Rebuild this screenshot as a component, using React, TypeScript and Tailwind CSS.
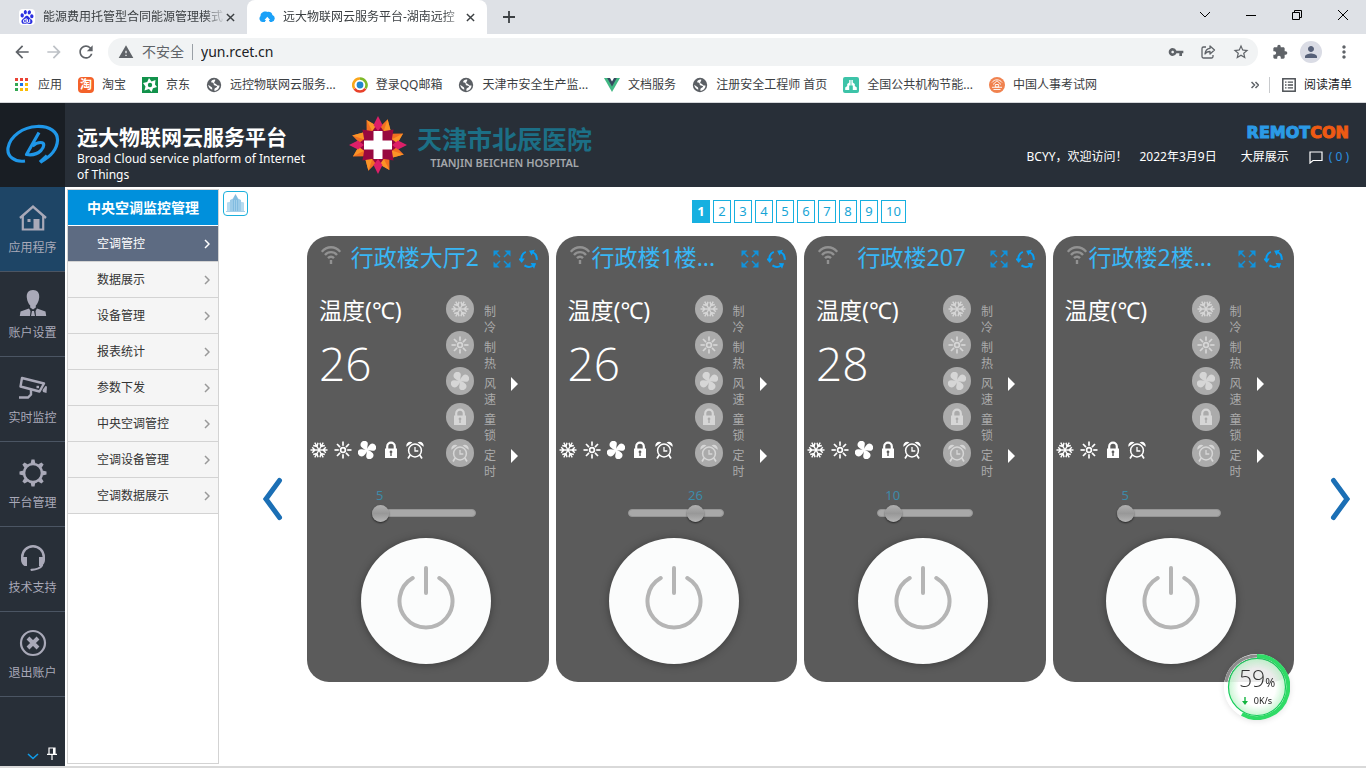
import React, { useState } from "react";
import {
  MdArrowBack,
  MdArrowForward,
  MdRefresh,
  MdWarning,
  MdVpnKey,
  MdStarBorder,
  MdExtension,
  MdPerson,
  MdMoreVert,
} from "react-icons/md";
import { SiBaidu } from "react-icons/si";

type IconProps = { className?: string };

/* ---------- browser icons ---------- */

function CloseIcon({ className = "" }: IconProps) {
  return (
    <svg viewBox="0 0 10 10" className={className} fill="none" stroke="currentColor" strokeWidth="1.6">
      <path d="M1 1l8 8M9 1l-8 8" />
    </svg>
  );
}

function CloudFavicon() {
  return (
    <svg viewBox="0 0 16 16" className="mr-2 size-4 shrink-0">
      <path
        d="M3.600 13a3.400 3.400 0 0 1-2-5.900C1 4.500 5 1.500 8.200 3c2.300-.800 4.800.600 5.200 2.900a3.700 3.700 0 0 1-.8 7.100H11L8.300 8.800 5.800 13z"
        fill="#1ba1f8"
      />
      <path d="M8.300 7.800l2.800 3.200H9.800l-1.600 2.500H5.800l1.800-2.500H5.500z" fill="#fff" />
    </svg>
  );
}

function AppsIcon() {
  const colors = ["#ea4335", "#ea4335", "#ea4335", "#34a853", "#1a73e8", "#fbbc04", "#34a853", "#fbbc04", "#fbbc04"];
  return (
    <svg viewBox="0 0 16 16" className="size-4 shrink-0">
      {colors.map((c, i) => (
        <rect key={i} x={1 + (i % 3) * 5} y={1 + Math.floor(i / 3) * 5} width="3" height="3" fill={c} />
      ))}
    </svg>
  );
}

function TaobaoIcon() {
  return (
    <span className="flex size-4 shrink-0 items-center justify-center rounded-sm bg-[#f4622a] text-xs font-bold leading-none text-white">
      淘
    </span>
  );
}

function JdIcon() {
  return (
    <svg viewBox="0 0 16 16" className="size-4 shrink-0">
      <rect width="16" height="16" fill="#12924b" />
      <path d="M7 1l2.500 3.500 4-1.500-.500 4.500L15 10l-4 1.200L9.500 15 7 12l-4.500 1.500L3.500 9.500 1 6l4.200-1z" fill="#fff" />
      <circle cx="8" cy="8" r="2.200" fill="#12924b" />
    </svg>
  );
}

function GlobeIcon() {
  return (
    <svg viewBox="0 0 16 16" className="size-4 shrink-0">
      <circle cx="8" cy="8" r="7.200" fill="#5b5f64" />
      <path
        d="M9.200 2.600C7 2.400 5 3.800 5.200 5c.3 1 1.700.5 2.300 1.200.5.700-.2 1.400.7 2 1 .5 2.600.2 2.900 1.200.3 1-1.800 1.200-2.400 2.200-.5.9-.2 1.500-.4 2.100 2.900.2 5.200-2.500 5.200-5.300-1.200.5-2.700.1-3-.8-.4-1.100-1.700-.9-2.200-1.600-.4-.9.700-1.500.9-2.400z"
        fill="#fff"
      />
      <path d="M2.200 7.800l3.500 2.500c.8.600.4 1.200.6 2.500-2.100-.7-3.700-2.600-4.100-5z" fill="#fff" />
    </svg>
  );
}

function QQMailIcon() {
  return (
    <svg viewBox="0 0 16 16" className="size-4 shrink-0" fill="none" strokeWidth="2.600">
      <path d="M2.300 11.500A6.500 6.500 0 0 1 8 1.500" stroke="#f9a61a" />
      <path d="M8 1.500a6.500 6.500 0 0 1 5.600 9.800" stroke="#7fb928" />
      <path d="M13.400 11.600a6.500 6.500 0 0 1-10.900 0" stroke="#e8412a" />
      <circle cx="8" cy="8" r="3.400" fill="#2186cc" />
    </svg>
  );
}

function VueIcon() {
  return (
    <svg viewBox="0 0 16 16" className="size-4 shrink-0">
      <path d="M0 1h16L8 15z" fill="#41b883" />
      <path d="M3.200 1h9.600L8 9.500z" fill="#35495e" />
      <path d="M6 1h4L8 4.500z" fill="#fff" />
    </svg>
  );
}

function GovIcon() {
  return (
    <svg viewBox="0 0 16 16" className="size-4 shrink-0">
      <rect width="16" height="16" rx="2" fill="#3dc3a8" />
      <path d="M6.200 3h3.600v2.500l2 1.500v2l2 1.500V13H9.800V8.500H6.200V13h-4v-2.500l2-1.500V7l2-1.500z" fill="#fff" />
      <path d="M8 3v10" stroke="#3dc3a8" strokeWidth=".8" />
    </svg>
  );
}

function ExamIcon() {
  return (
    <svg viewBox="0 0 16 16" className="size-4 shrink-0">
      <circle cx="8" cy="8" r="8" fill="#f0824f" />
      <g fill="none" stroke="#fff" strokeWidth=".9">
        <path d="M3 5.500a6 6 0 0 1 10 0M4 7.500L8 3.800l4 3.700M3 10.300h10M4.500 12.500h7M6.300 7.500h3.400v2.500H6.300z" />
      </g>
    </svg>
  );
}

function ShareIcon() {
  return (
    <svg viewBox="0 0 16 16" className="size-4" fill="none" stroke="currentColor" strokeWidth="1.300">
      <path d="M6 3H3.500A1.500 1.500 0 0 0 2 4.500v8A1.500 1.500 0 0 0 3.500 14h8a1.500 1.500 0 0 0 1.500-1.500V11" />
      <path d="M10 2l4.500 4L10 10V7.500c-2.500 0-4 .8-5 2.500.3-3.500 2-5.300 5-5.600z" strokeLinejoin="round" />
    </svg>
  );
}

function ReadingListIcon() {
  return (
    <svg viewBox="0 0 14 14" className="size-3.5" fill="none" stroke="#4d5156" strokeWidth="1.500">
      <rect x=".8" y=".8" width="12.400" height="12.400" />
      <path d="M3 4.200h1.500M3 7h1.500M3 9.800h1.500M5.800 4.200H11M5.800 7H11M5.800 9.800H11" strokeWidth="1.300" />
    </svg>
  );
}

/* ---------- brand marks ---------- */

function BroadLogo() {
  return (
    <svg viewBox="0 0 54 42" className="h-[42px] w-[54px]" fill="none" stroke="#1f97e8">
      <path
        d="M19 37C8 38.500 1 32 2 24 4 12 17 3 31 2.500 44 2 52 8 51.500 16.500 51 26 43 33.500 34.500 38"
        strokeWidth="3.200"
      />
      <path
        d="M33 8.500L20.500 30.500c5 .8 11-.5 14.500-4 3.500-3.700 4-8-.5-8-3 0-5.500 1.300-8 3.500"
        strokeWidth="3.200"
        strokeLinejoin="round"
      />
      <path d="M34 38.300l7-6.500" strokeWidth="3.400" />
    </svg>
  );
}

function HospitalMark() {
  const eight = [0, 45, 90, 135, 180, 225, 270, 315];
  const four = [0, 90, 180, 270];
  return (
    <svg viewBox="-29 -29 58 58" className="size-[58px]">
      {eight.map((a) => (
        <g key={a} transform={`rotate(${a + 22.5})`}>
          <path d="M-6.500-14L-1-27.500 7-17 6-10h-12z" fill="#f26f21" />
          <path d="M-1-27.500L7-17 6-10 0-14z" fill="#fb9427" />
        </g>
      ))}
      {eight.map((a) => (
        <path key={a} transform={`rotate(${a})`} d="M0-22L7-12 0-4-7-12z" fill="#98083f" />
      ))}
      {four.map((a) => (
        <path key={a} transform={`rotate(${a})`} d="M0-29L4.500-20 0-14-4.500-20z" fill="#dd1f68" />
      ))}
      <path d="M-4.500-14h9v9.500H14v9H4.500V14h-9V4.500H-14v-9h9.500z" fill="#fff" />
    </svg>
  );
}

/* ---------- side navigation icons ---------- */

function HomeIcon() {
  return (
    <svg viewBox="0 0 28 28" className="size-7" fill="none" stroke="currentColor">
      <path d="M1 14L14 2.500 27 14" strokeWidth="2.400" />
      <path d="M3.800 12v13.500h20.400V12" strokeWidth="2.200" />
      <path d="M14.500 15h6v10h-6z" fill="currentColor" stroke="none" />
      <path d="M8.500 15h3v3h-3z" fill="currentColor" stroke="none" />
    </svg>
  );
}

function UserIcon() {
  return (
    <svg viewBox="0 0 28 28" className="size-7" fill="currentColor">
      <path d="M14 1c4.500 0 6.700 3 6.200 7.500-.4 3.800-1.800 6.500-3.400 8v2L14 20.500l-2.800-2v-2c-1.600-1.500-3-4.200-3.400-8C7.300 4 9.500 1 14 1z" />
      <path d="M10 19.500L1.500 22.500.8 27H11l.5-5zM18 19.500l8.500 3 .7 4.500H17l-.5-5zM13 22h2l1 5h-4z" />
    </svg>
  );
}

function CameraIcon() {
  return (
    <svg viewBox="0 0 28 28" className="size-7" fill="none" stroke="currentColor" strokeWidth="2.400">
      <path d="M3 4L25 9.500 20.500 17.500 1.500 12.500z" strokeLinejoin="round" />
      <path d="M12 16v4.500L9 23.500H0" />
      <path d="M28 12.500L27.500 19l-3.500-1-.5-2 3-4z" fill="currentColor" stroke="none" />
      <path d="M17.500 13h2.500" />
    </svg>
  );
}

function GearIcon() {
  const teeth = [0, 45, 90, 135, 180, 225, 270, 315];
  return (
    <svg viewBox="-14 -14 28 28" className="size-7">
      <circle r="9" fill="none" stroke="currentColor" strokeWidth="2.600" />
      {teeth.map((a) => (
        <path key={a} transform={`rotate(${a})`} d="M-2.400-9.500L-1.500-13.500h3l.9 4z" fill="currentColor" />
      ))}
    </svg>
  );
}

function HeadsetIcon() {
  return (
    <svg viewBox="0 0 28 28" className="size-7" fill="none" stroke="currentColor">
      <path d="M3.200 16v-3a10.800 10.800 0 0 1 21.600 0v3" strokeWidth="2.400" />
      <path d="M2 13h6v9H5.500C3.500 21 2 18.500 2 16zM26 13h-6v9h2.500c2-1 3.500-3.500 3.500-6z" fill="currentColor" stroke="none" />
      <path d="M23 21.500C21 24.500 18 25.500 12.500 25.800" strokeWidth="2.200" strokeLinecap="round" />
    </svg>
  );
}

function ExitIcon() {
  return (
    <svg viewBox="0 0 28 28" className="size-7" fill="none" stroke="currentColor">
      <circle cx="14" cy="14" r="12" strokeWidth="2.200" />
      <path d="M9 9l10 10M19 9L9 19" strokeWidth="4" />
    </svg>
  );
}

/* ---------- device icons ---------- */

function SnowIcon({ className = "" }: IconProps) {
  return (
    <svg viewBox="-9 -9 18 18" className={className} fill="none" stroke="currentColor" strokeWidth="1.400">
      {[0, 60, 120, 180, 240, 300].map((a) => (
        <path key={a} transform={`rotate(${a + 30})`} d="M0 0V-8.500M0-4L-2.800-6.800M0-4L2.800-6.800" />
      ))}
    </svg>
  );
}

function SunIcon({ className = "" }: IconProps) {
  return (
    <svg viewBox="-9 -9 18 18" className={className} fill="none" stroke="currentColor" strokeWidth="1.700">
      <circle r="2.400" />
      {[0, 45, 90, 135, 180, 225, 270, 315].map((a) => (
        <path key={a} transform={`rotate(${a})`} d="M0-4.200V-8.500" />
      ))}
    </svg>
  );
}

function FanIcon({ className = "" }: IconProps) {
  return (
    <svg viewBox="-9 -9 18 18" className={className} fill="currentColor">
      {[0, 90, 180, 270].map((a) => (
        <path
          key={a}
          transform={`rotate(${a + 14})`}
          d="M.800.800C-1.500.200-4.500-.300-6.500-1.800-8.500-3.500-7.800-6.500-5.800-7.800-3.500-9.200-.800-8.200-.600-5.500-.500-3.500-.200-1 .800.800z"
        />
      ))}
    </svg>
  );
}

function LockIcon({ className = "" }: IconProps) {
  return (
    <svg viewBox="0 0 18 18" className={className}>
      <path d="M5.200 8V5.500a3.800 3.800 0 0 1 7.600 0V8" fill="none" stroke="currentColor" strokeWidth="2.200" />
      <path
        fillRule="evenodd"
        d="M3 7.500h12V17H3zM9 9.500a1.400 1.400 0 0 0-.7 2.600V15h1.400v-2.900A1.400 1.400 0 0 0 9 9.500z"
        fill="currentColor"
      />
    </svg>
  );
}

function AlarmIcon({ className = "" }: IconProps) {
  return (
    <svg viewBox="0 0 18 18" className={className} fill="none" stroke="currentColor">
      <circle cx="9" cy="9.500" r="6.400" strokeWidth="1.500" />
      <path d="M9 6v4h3.300" strokeWidth="1.300" />
      <path d="M4.200 14l-2.200 3.500M13.800 14l2.200 3.500" strokeWidth="1.700" />
      <path d="M.4 5.800C-.3 2.500 3-.5 6.400 1.500zM17.600 5.800C18.300 2.500 15-.5 11.600 1.500z" fill="currentColor" stroke="none" />
    </svg>
  );
}

function WifiIcon() {
  return (
    <svg viewBox="0 0 20 20" className="mb-1 size-5 shrink-0 text-[#929292]" fill="none" stroke="currentColor" strokeWidth="2.400">
      <path d="M.8 6.800c5-6 13.400-6 18.400 0M4 10c3.200-3.800 8.800-3.800 12 0M7 13.200c1.800-1.900 4.200-1.900 6 0" />
      <path d="M10 15v4" />
    </svg>
  );
}

function ExpandIcon() {
  return (
    <svg viewBox="-9 -9 18 18" className="size-[18px]">
      {[0, 90, 180, 270].map((a) => (
        <g key={a} transform={`rotate(${a})`}>
          <path d="M-8.500-8.500h6L-8.500-2.500z" fill="currentColor" />
          <path d="M-7-7l5 5" stroke="currentColor" strokeWidth="1.400" />
        </g>
      ))}
    </svg>
  );
}

function CycleIcon() {
  return (
    <svg viewBox="-10 -10 20 20" className="size-5">
      {[-90, 30, 150].map((a) => (
        <g key={a} transform={`rotate(${a}) scale(-1 1)`}>
          <path d="M-7.100-3.200A7.800 7.800 0 0 1 0-7.800" fill="none" stroke="currentColor" strokeWidth="2" />
          <path d="M-.500-11L4-7.200-.500-4.200z" fill="currentColor" />
        </g>
      ))}
    </svg>
  );
}

function PowerIcon() {
  return (
    <svg viewBox="0 0 60 66" className="h-[66px] w-[60px]" fill="none" stroke="#b5b5b5" strokeWidth="4" strokeLinecap="round">
      <path d="M16.700 13a26.500 26.500 0 1 0 26.600 0" />
      <path d="M30 3v25" />
    </svg>
  );
}

/* ---------- data ---------- */

const bookmarks = [
  { label: "应用", icon: <AppsIcon /> },
  { label: "淘宝", icon: <TaobaoIcon /> },
  { label: "京东", icon: <JdIcon /> },
  { label: "远控物联网云服务...", icon: <GlobeIcon /> },
  { label: "登录QQ邮箱", icon: <QQMailIcon /> },
  { label: "天津市安全生产监...", icon: <GlobeIcon /> },
  { label: "文档服务", icon: <VueIcon /> },
  { label: "注册安全工程师 首页", icon: <GlobeIcon /> },
  { label: "全国公共机构节能...", icon: <GovIcon /> },
  { label: "中国人事考试网", icon: <ExamIcon /> },
];

const sections = [
  { label: "应用程序", icon: <HomeIcon /> },
  { label: "账户设置", icon: <UserIcon /> },
  { label: "实时监控", icon: <CameraIcon /> },
  { label: "平台管理", icon: <GearIcon /> },
  { label: "技术支持", icon: <HeadsetIcon /> },
  { label: "退出账户", icon: <ExitIcon /> },
];

const menu = ["空调管控", "数据展示", "设备管理", "报表统计", "参数下发", "中央空调管控", "空调设备管理", "空调数据展示"];

const modes = [
  { label: "制冷", Icon: SnowIcon, more: false },
  { label: "制热", Icon: SunIcon, more: false },
  { label: "风速", Icon: FanIcon, more: true },
  { label: "童锁", Icon: LockIcon, more: false },
  { label: "定时", Icon: AlarmIcon, more: true },
];

type Device = { name: string; long: boolean; temp: string; setpoint: number; fan: boolean };

const devices: Device[] = [
  { name: "行政楼大厅2", long: false, temp: "26", setpoint: 5, fan: true },
  { name: "行政楼1楼...", long: true, temp: "26", setpoint: 26, fan: true },
  { name: "行政楼207", long: false, temp: "28", setpoint: 10, fan: true },
  { name: "行政楼2楼...", long: true, temp: "", setpoint: 5, fan: false },
];

const MIN = 5;
const MAX = 35;

/* ---------- browser chrome ---------- */

function Tab({ title, icon, active }: { title: string; icon: React.ReactNode; active?: boolean }) {
  return (
    <div className={`flex h-full w-60 items-center pl-3 pr-3 ${active ? "rounded-t-lg bg-white" : ""}`}>
      {icon}
      <span className="min-w-0 flex-1 whitespace-nowrap text-[#3c4043] [mask-image:linear-gradient(to_right,black_88%,transparent)]">
        {title}
      </span>
      <button aria-label="关闭标签页" className="text-[#3c4043]">
        <CloseIcon className="size-[9px]" />
      </button>
    </div>
  );
}

function Browser() {
  return (
    <div className="text-xs">
      <div className="flex h-[34px] items-center bg-[#dee1e6] pl-[7px]">
        <Tab
          title="能源费用托管型合同能源管理模式"
          icon={
            <span className="mr-2 flex size-4 shrink-0 items-center justify-center rounded-sm bg-white text-[#2a2fe0]">
              <SiBaidu className="size-3.5" />
            </span>
          }
        />
        <Tab title="远大物联网云服务平台-湖南远控" icon={<CloudFavicon />} active />
        <button aria-label="新标签页" className="ml-4 text-[#3c4043]">
          <svg viewBox="0 0 12 12" className="size-3" stroke="currentColor" strokeWidth="1.800">
            <path d="M6 0v12M0 6h12" />
          </svg>
        </button>
        <div className="ml-auto flex h-full items-center pb-1 text-black">
          <button aria-label="搜索标签页" className="flex w-[46px] justify-center">
            <svg viewBox="0 0 12 8" className="h-2 w-3" fill="none" stroke="currentColor">
              <path d="M1 1l5 5 5-5" />
            </svg>
          </button>
          <button aria-label="最小化" className="flex w-[46px] justify-center">
            <svg viewBox="0 0 10 10" className="size-2.5" stroke="currentColor">
              <path d="M0 5.500h10" />
            </svg>
          </button>
          <button aria-label="还原" className="flex w-[46px] justify-center">
            <svg viewBox="0 0 10 10" className="size-2.5" fill="none" stroke="currentColor">
              <path d="M.5 2.500h7v7h-7zM2.500 2.500v-2h7v7h-2" />
            </svg>
          </button>
          <button aria-label="关闭" className="flex w-[46px] justify-center">
            <svg viewBox="0 0 10 10" className="size-2.5" stroke="currentColor">
              <path d="M0 0l10 10M10 0L0 10" />
            </svg>
          </button>
        </div>
      </div>

      <div className="flex h-9 items-center bg-white pl-3 pr-3">
        <button aria-label="后退" className="text-[#5f6368]"><MdArrowBack className="size-5" /></button>
        <button aria-label="前进" className="ml-3 text-[#bdc1c6]"><MdArrowForward className="size-5" /></button>
        <button aria-label="重新加载" className="ml-3 text-[#5f6368]"><MdRefresh className="size-5" /></button>
        <div className="ml-3 flex h-7 flex-1 items-center rounded-full bg-[#f1f3f4] pl-2.5 pr-2 text-[#5f6368]">
          <MdWarning className="size-4 shrink-0" />
          <span className="ml-2 shrink-0 text-sm">不安全</span>
          <span className="mx-2 h-4 w-px bg-[#9aa0a6]" />
          <input
            aria-label="地址"
            defaultValue="yun.rcet.cn"
            className="min-w-0 flex-1 bg-transparent text-sm text-[#202124] outline-none"
          />
          <button aria-label="密码"><MdVpnKey className="size-4" /></button>
          <button aria-label="分享" className="ml-4"><ShareIcon /></button>
          <button aria-label="收藏" className="ml-4"><MdStarBorder className="size-[18px]" /></button>
        </div>
        <button aria-label="扩展程序" className="ml-3.5 text-[#5f6368]"><MdExtension className="size-4" /></button>
        <button aria-label="个人资料" className="ml-3 flex size-[22px] items-center justify-center rounded-full bg-[#dadce5] text-[#566078]">
          <MdPerson className="size-[18px]" />
        </button>
        <button aria-label="菜单" className="ml-3 text-[#5f6368]"><MdMoreVert className="size-5" /></button>
      </div>

      <nav className="flex h-[33px] items-center gap-4 border-b border-[#d5d7da] bg-white px-3.5 pb-0.5 text-[#3c4043]">
        {bookmarks.map((b) => (
          <a key={b.label} href="#" className="flex items-center gap-2 whitespace-nowrap">
            {b.icon}
            {b.label}
          </a>
        ))}
        <div className="ml-auto flex items-center">
          <button aria-label="更多书签" className="text-[#5f6368]">
            <svg viewBox="0 0 8 8" className="size-2" fill="none" stroke="currentColor" strokeWidth="1.500">
              <path d="M.5 1l3 3-3 3M4.500 1l3 3-3 3" />
            </svg>
          </button>
          <span className="ml-2.5 h-4 w-px bg-[#c8cacd]" />
          <button className="ml-3 flex items-center gap-2 text-[#202124]">
            <ReadingListIcon />
            阅读清单
          </button>
        </div>
      </nav>
    </div>
  );
}

/* ---------- platform ---------- */

function PlatformHeader() {
  return (
    <header className="flex h-[84px] bg-[#282f38] text-white">
      <div className="flex w-[65px] items-center justify-center bg-[#191e24]">
        <BroadLogo />
      </div>
      <div className="w-[272px] pl-3 pt-5">
        <h1 className="text-[21px] font-bold leading-7">远大物联网云服务平台</h1>
        <p className="w-60 text-xs leading-4">Broad Cloud service platform of Internet of Things</p>
      </div>
      <div className="ml-3 flex items-center gap-2.5">
        <HospitalMark />
        <div className="pt-2 text-center">
          <div className="text-[25px] font-bold leading-7 text-[#1c6f86]">天津市北辰医院</div>
          <div className="text-[11px] font-semibold leading-5 text-[#a4a7ab]">TIANJIN BEICHEN HOSPITAL</div>
        </div>
      </div>
      <div className="ml-auto flex flex-col items-end pr-[17px] pt-5 text-xs">
        <div className="font-['DejaVu_Sans',sans-serif] text-base font-bold leading-5 text-[#2b9ae6] [-webkit-text-stroke:1px]">
          REMOT<span className="text-[#ee5a13]">CON</span>
        </div>
        <div className="mt-1 flex h-5 items-center">
          <span>BCYY，欢迎访问！</span>
          <span className="ml-3">2022年3月9日</span>
          <a href="#" className="ml-6">大屏展示</a>
          <button className="ml-5 flex items-center gap-1.5">
            <svg viewBox="0 0 14 13" className="h-[13px] w-3.5" fill="none" stroke="#fff" strokeWidth="1.200">
              <path d="M1 1h12v8.500H4L1 12z" />
            </svg>
            <span className="text-[#2a8fe0]">( 0 )</span>
          </button>
        </div>
      </div>
    </header>
  );
}

function Sidebar() {
  return (
    <aside className="flex w-[65px] flex-col bg-[#282f38] text-[#a9a9b8]">
      {sections.map((s, i) => (
        <button
          key={s.label}
          className={`flex h-[85px] flex-col items-center border-b border-[#4b5563] pt-[17px] text-xs ${i === 0 ? "bg-[#1e4566]" : ""}`}
        >
          {s.icon}
          <span className="mt-2 leading-4">{s.label}</span>
        </button>
      ))}
      <div className="mt-auto flex items-end justify-end gap-2 pb-1.5 pr-2">
        <button aria-label="展开">
          <svg viewBox="0 0 12 7" className="h-[7px] w-3" fill="none" stroke="#0f9be8" strokeWidth="1.600">
            <path d="M1 1l5 4.500L11 1" />
          </svg>
        </button>
        <button aria-label="固定">
          <svg viewBox="0 0 10 13" className="h-[13px] w-2.5" fill="none" stroke="#fff" strokeWidth="1.200">
            <path d="M2 7V1h6v6M0 7.300h10M5 7v6" />
            <path d="M7 1v6" strokeWidth="2" />
          </svg>
        </button>
      </div>
    </aside>
  );
}

function SubMenu() {
  return (
    <nav className="my-0.5 ml-0.5 w-[152px] border border-[#d3d3d3] bg-white text-xs text-[#333]">
      <h2 className="flex h-9 items-center justify-center border-b border-white bg-[#0090dc] text-sm font-bold text-white">
        中央空调监控管理
      </h2>
      {menu.map((m, i) => (
        <a
          key={m}
          href="#"
          className={`flex h-9 items-center justify-between border-b border-[#d3d3d3] pl-[29px] pr-2 ${
            i === 0 ? "bg-[#5d6b82] text-white" : "bg-[#f5f5f5]"
          }`}
        >
          {m}
          <svg
            viewBox="0 0 6 10"
            className={`h-2.5 w-1.5 ${i === 0 ? "text-white" : "text-[#999]"}`}
            fill="none"
            stroke="currentColor"
            strokeWidth="1.500"
          >
            <path d="M1 1l4 4-4 4" />
          </svg>
        </a>
      ))}
    </nav>
  );
}

function DeviceCard({ device }: { device: Device }) {
  const [value, setValue] = useState(device.setpoint);
  const percent = ((value - MIN) / (MAX - MIN)) * 100;
  return (
    <article className="min-w-0 rounded-[22px] bg-[#5b5b5b] pb-[18px]">
      <div className="flex h-[42px] items-center pl-3.5 pr-2">
        <WifiIcon />
        <h3
          className={`ml-0.5 flex-1 whitespace-nowrap text-[23px] leading-8 text-[#38b6f5] ${
            device.long ? "text-left" : "text-center"
          }`}
        >
          {device.name}
        </h3>
        <button aria-label="全屏" className="ml-1.5 mt-1 text-[#1093dc]"><ExpandIcon /></button>
        <button aria-label="刷新" className="ml-2 mr-0.5 mt-1 text-[#08a0f5]"><CycleIcon /></button>
      </div>

      <div className="mt-[17px] flex">
        <div className="w-[139px]">
          <div className="pl-3 text-[23px] leading-[30px] text-white">温度(℃)</div>
          <div className="mt-2 h-[60px] pl-3 font-['Open_Sans',sans-serif] text-[46px] font-light leading-[60px] text-white">
            {device.temp}
          </div>
          <div className="mt-12 flex gap-1.5 pl-[3px] text-white">
            {modes
              .filter((m) => device.fan || m.Icon !== FanIcon)
              .map(({ label, Icon }) => (
                <Icon key={label} className="size-[18px]" />
              ))}
          </div>
        </div>
        <div>
          {modes.map(({ label, Icon, more }) => (
            <div key={label} className="flex h-9 items-start">
              <button aria-label={label} className="flex size-7 items-center justify-center rounded-full bg-[#ababab] text-[#d6d6d6]">
                <Icon className="size-[18px]" />
              </button>
              <span className="ml-2.5 mt-[9px] w-3 text-xs leading-4 text-[#aaa]">{label}</span>
              {more && (
                <button aria-label={`${label}选项`} className="ml-[15px] mt-2.5">
                  <svg viewBox="0 0 7 14" className="h-3.5 w-[7px]" fill="#fff">
                    <path d="M0 0l7 7-7 7z" />
                  </svg>
                </button>
              )}
            </div>
          ))}
        </div>
      </div>

      <div className="mx-auto mt-3 w-24">
        <div className="relative h-4 text-[13px] leading-4 text-[#3d8aa8]">
          <span className="absolute -translate-x-1/2" style={{ left: `${percent}%` }}>{value}</span>
        </div>
        <div className="relative -mx-2 mt-px h-[18px]">
          <span className="absolute inset-x-2 top-[5px] h-2 rounded-full border border-[#959595] bg-[#a8a8a8]" />
          <input
            type="range"
            aria-label={`${device.name} 设定温度`}
            min={MIN}
            max={MAX}
            value={value}
            onChange={(e) => setValue(Number(e.target.value))}
            className="absolute inset-0 w-full appearance-none bg-transparent [&::-webkit-slider-thumb]:size-[17px] [&::-webkit-slider-thumb]:appearance-none [&::-webkit-slider-thumb]:rounded-full [&::-webkit-slider-thumb]:bg-linear-to-b [&::-webkit-slider-thumb]:from-[#b0b0b0] [&::-webkit-slider-thumb]:via-[#989898] [&::-webkit-slider-thumb]:to-[#b4b4b4] [&::-webkit-slider-thumb]:shadow-[0_1px_2px_rgba(0,0,0,0.6)]"
          />
        </div>
      </div>

      <div className="mt-4 flex justify-center pr-1">
        <button
          aria-label="电源"
          className="flex h-[126px] w-[130px] items-center justify-center rounded-[50%] bg-[#fbfcfc] pb-1.5 shadow-[0_1px_8px_rgba(0,0,0,0.35)]"
        >
          <PowerIcon />
        </button>
      </div>
    </article>
  );
}

function Pager() {
  const [page, setPage] = useState(1);
  return (
    <div className="flex gap-[3px] text-[13px]">
      {[1, 2, 3, 4, 5, 6, 7, 8, 9, 10].map((n) => (
        <button
          key={n}
          onClick={() => setPage(n)}
          className={`h-[23px] min-w-[18px] border border-[#17b0e0] px-1 ${
            n === page ? "bg-[#17b0e0] font-bold text-white" : "bg-white text-[#17a5d6]"
          }`}
        >
          {n}
        </button>
      ))}
    </div>
  );
}

function BuildingButton() {
  return (
    <button aria-label="楼宇" className="ml-1 mt-1 flex size-[25px] items-center justify-center rounded border border-[#1bb0dc] bg-white">
      <svg viewBox="0 0 19 19" className="size-[19px]">
        <path d="M1 8.500L5 7.500V18H1zM14 7.500l4 1V18h-4z" fill="#b5daf0" />
        <path d="M4 6l3-1.500V18H4zM12 4.500L15 6v12h-3z" fill="#9ccbe8" />
        <path d="M7 4.500L9.500 0 12 4.500V18H7z" fill="#82bce0" />
        <path d="M8.500 6v12M10.500 6v12M2.500 10v8M16.500 10v8" stroke="#b9dcf0" strokeWidth=".6" />
        <path d="M0 17.500h19" stroke="#a5d0ea" />
      </svg>
    </button>
  );
}

function Chevron({ next }: { next?: boolean }) {
  return (
    <button aria-label={next ? "下一页" : "上一页"} className="mt-[241px] shrink-0">
      <svg
        viewBox="0 0 20 44"
        className="h-11 w-5"
        fill="none"
        stroke="#1b6fb5"
        strokeWidth="5"
        strokeLinecap="round"
      >
        <path d={next ? "M3.500 3.500L17 22 3.500 40.500" : "M16.500 3.500L3 22 16.500 40.500"} />
      </svg>
    </button>
  );
}

function NetworkGauge() {
  return (
    <div className="fixed bottom-12 right-[76px] flex size-[66px] flex-col items-center justify-center rounded-full shadow-[0_1px_6px_rgba(0,0,0,0.12)]">
      <svg viewBox="-33 -33 66 66" className="absolute inset-0 size-full">
        <defs>
          <radialGradient id="gauge">
            <stop offset="65%" stopColor="#fff" stopOpacity="0.88" />
            <stop offset="100%" stopColor="#c4f5cf" stopOpacity="0.95" />
          </radialGradient>
        </defs>
        <circle r="31" fill="none" stroke="#fff" strokeWidth="4" />
        <path d="M-31-5A31 31 0 0 1 0-31" fill="none" stroke="#8c8c8c" strokeWidth="3" />
        <circle r="28.500" fill="url(#gauge)" stroke="#17cc5c" strokeWidth="1.200" />
        <path d="M0-31A31 31 0 1 1-15 27" fill="none" stroke="#2fdb66" strokeWidth="4" />
      </svg>
      <div className="relative leading-6 text-[#333]">
        <span className="font-['Open_Sans',sans-serif] text-[23px] font-light">59</span>
        <span className="text-xs">%</span>
      </div>
      <div className="relative flex items-center gap-1.5 text-[9px] leading-4 text-[#222]">
        <svg viewBox="0 0 6 8" className="h-2 w-1.5" fill="#12b53f">
          <path d="M2.300 0h1.400v4H6L3 8 0 4h2.300z" />
        </svg>
        0K/s
      </div>
    </div>
  );
}

export default function App() {
  return (
    <div className="flex min-h-screen flex-col bg-white font-['Noto_Sans','Noto_Sans_CJK_SC',sans-serif]">
      <Browser />
      <PlatformHeader />
      <div className="flex flex-1 border-b-2 border-[#d9d9d9]">
        <Sidebar />
        <SubMenu />
        <main className="min-w-0 flex-1">
          <div className="flex h-[49px] items-start">
            <BuildingButton />
            <div className="flex flex-1 justify-center pr-4 pt-[13px]">
              <Pager />
            </div>
          </div>
          <div className="flex items-start pl-11 pr-4">
            <Chevron />
            <div className="ml-6 mr-9 grid min-w-0 flex-1 grid-cols-4 gap-[7px]">
              {devices.map((d) => (
                <DeviceCard key={d.name} device={d} />
              ))}
            </div>
            <Chevron next />
          </div>
        </main>
      </div>
      <NetworkGauge />
    </div>
  );
}
